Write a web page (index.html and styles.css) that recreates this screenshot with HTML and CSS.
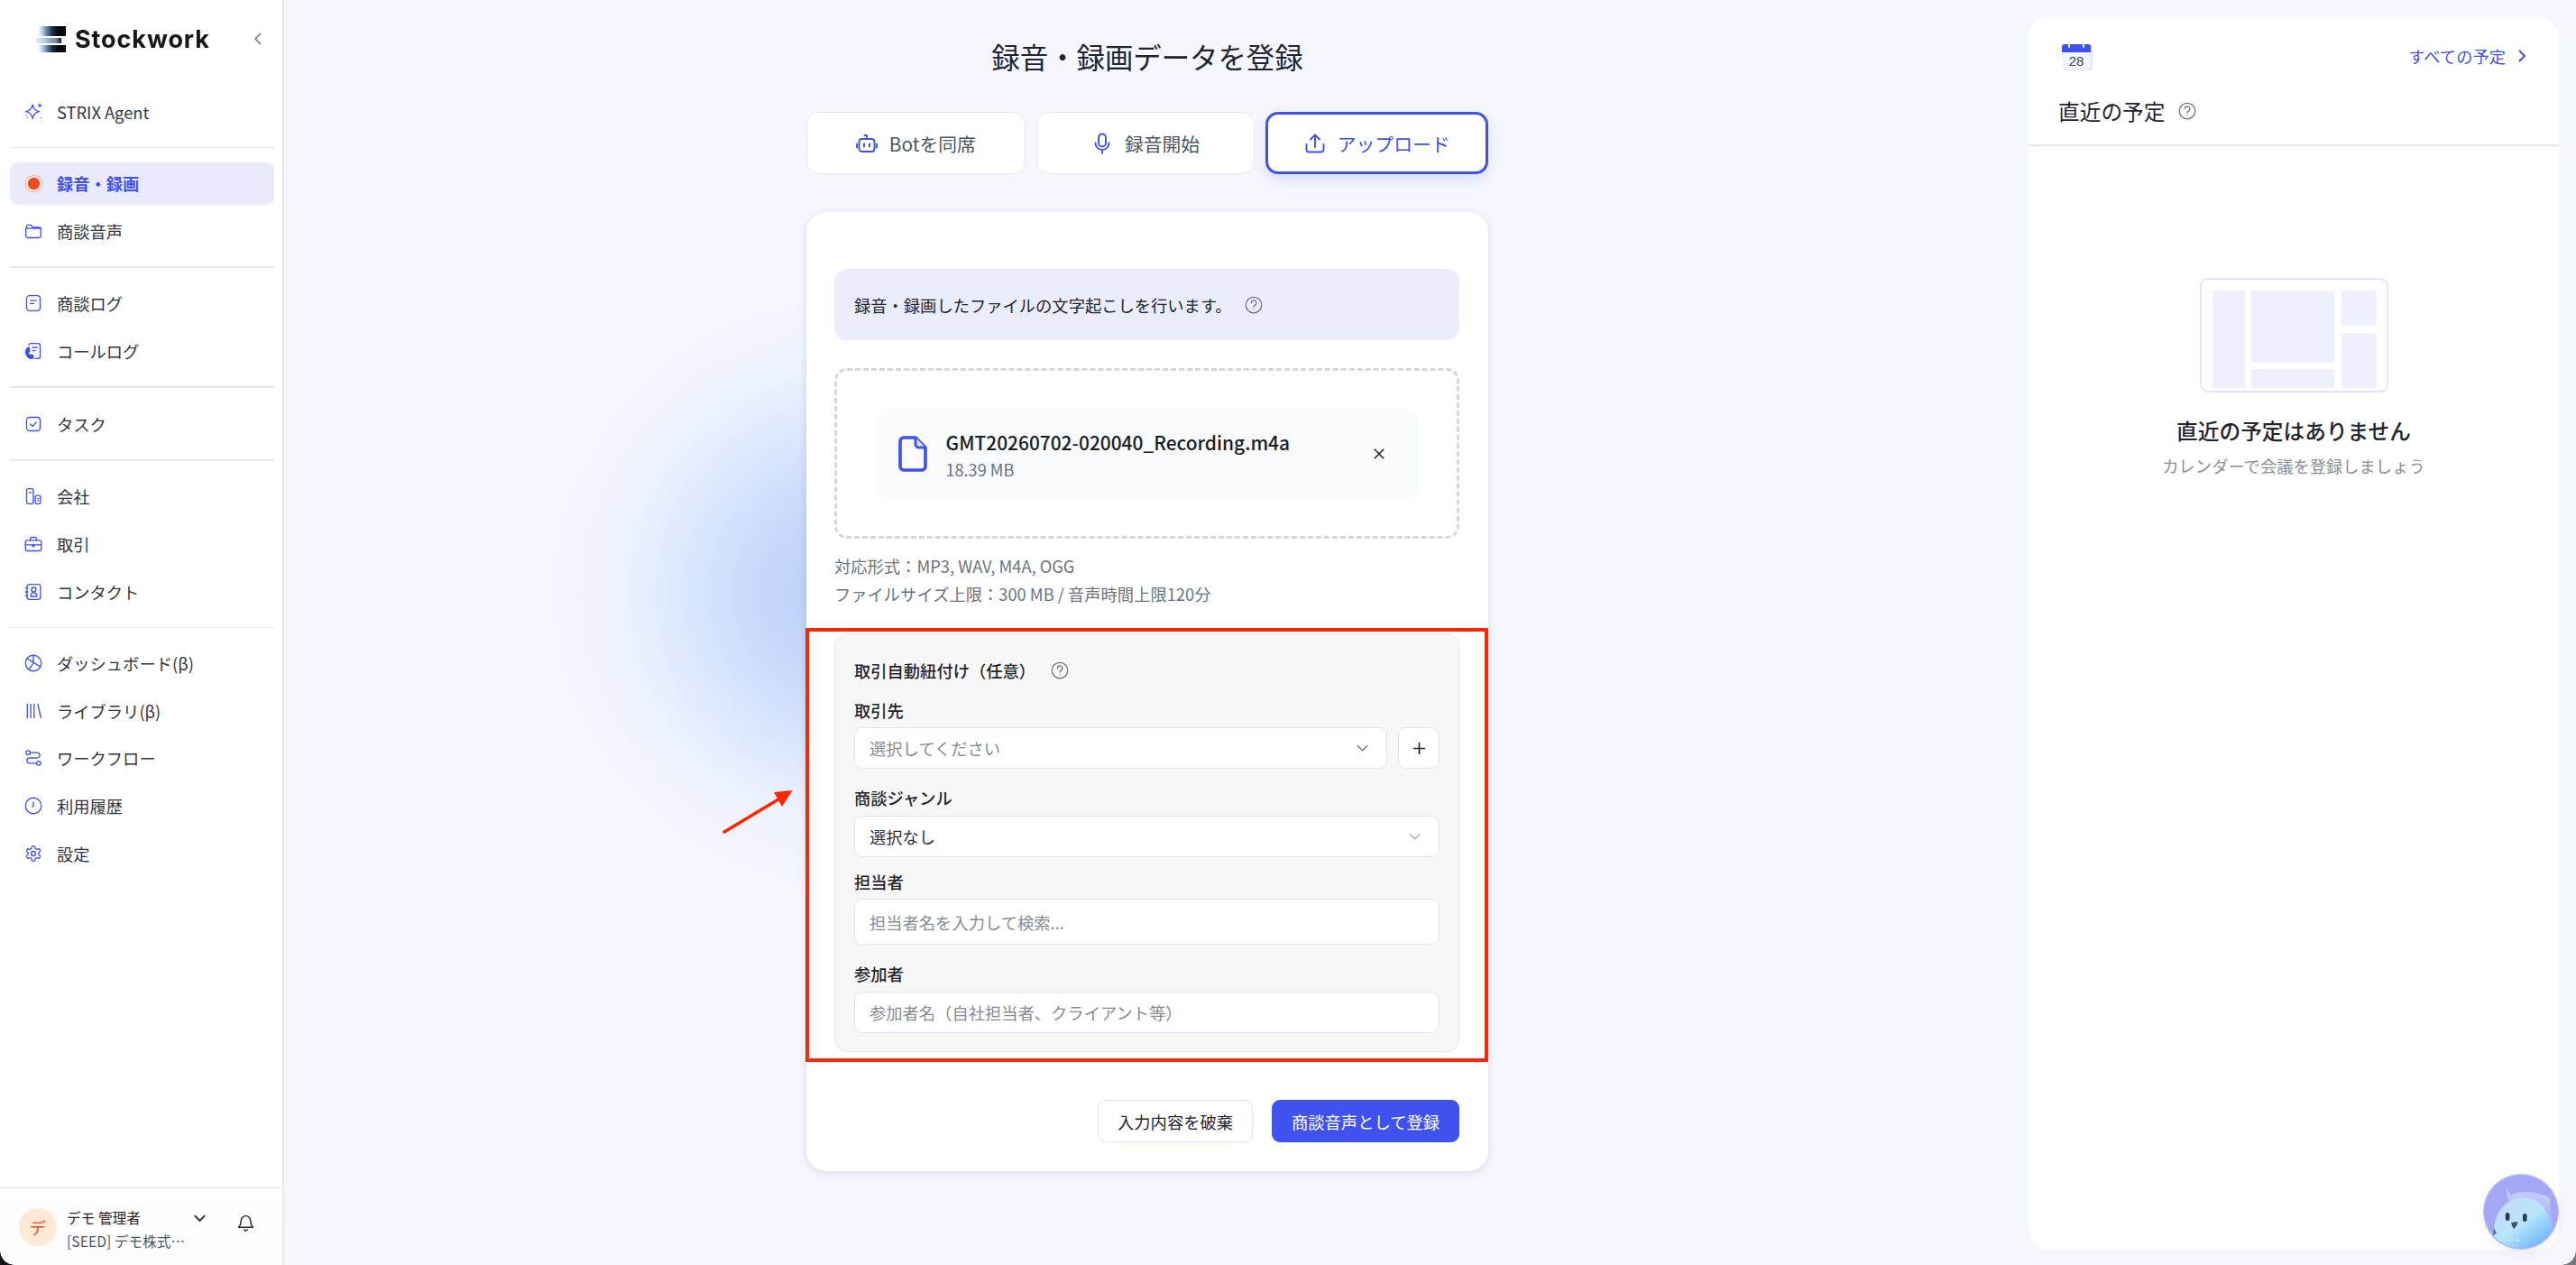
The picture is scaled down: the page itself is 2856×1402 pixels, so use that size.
FILE: index.html
```html
<!DOCTYPE html>
<html lang="ja">
<head>
<meta charset="utf-8">
<title>録音・録画データを登録</title>
<link rel="stylesheet" href="styles.css">
</head>
<body>
<div class="app">
  <aside class="sidebar">
    <div class="brand">
      <svg class="brand-mark" viewBox="0 0 36 32">
        <defs>
          <linearGradient id="bm" x1="0" x2="1" y1="0" y2="0">
            <stop offset="0" stop-color="#b4d0ee" stop-opacity=".25"/>
            <stop offset=".25" stop-color="#6f9cc9"/>
            <stop offset=".5" stop-color="#1c2c40"/>
            <stop offset=".7" stop-color="#08090c"/>
            <stop offset="1" stop-color="#08090c"/>
          </linearGradient>
          <linearGradient id="bm2" x1="0" x2="1" y1="0" y2="0">
            <stop offset="0" stop-color="#c5dcf2" stop-opacity=".5"/>
            <stop offset=".55" stop-color="#86aed5"/>
            <stop offset=".8" stop-color="#7c8592"/>
            <stop offset="1" stop-color="#15171c"/>
          </linearGradient>
        </defs>
        <path fill="url(#bm)" d="M4 2h30v11H4z"/>
        <path fill="url(#bm2)" d="M1 15h28v6H1z"/>
        <path fill="url(#bm)" d="M4 23h30v8H4z"/>
      </svg>
      <span class="brand-name">Stockwork</span>
      <svg class="collapse" viewBox="0 0 12 16"><path d="M9 2 3 8l6 6"/></svg>
    </div>
    <nav class="nav">
      <a class="item">
        <svg class="ico" viewBox="0 0 24 24"><path d="M11 2.500c1 5.500 3.500 8 9 9-5.500 1-8 3.500-9 9.500-1-6-3.500-8.500-9-9.500 5.500-1 8-3.500 9-9z"/><path d="M20.500 1.500v4M18.500 3.500h4"/><path d="M3.500 19.500v.01M2.500 16v.01M22 20v.01"/></svg>
        <span>STRIX Agent</span>
      </a>
      <hr class="rule">
      <a class="item active">
        <svg class="ico rec" viewBox="0 0 24 24"><circle class="rec-halo" cx="12" cy="12" r="11.800"/><circle class="rec-ring" cx="12" cy="12" r="9.200"/><circle class="rec-dot" cx="12" cy="12" r="7.700"/></svg>
        <span>録音・録画</span>
      </a>
      <a class="item">
        <svg class="ico" viewBox="0 0 24 24"><path d="M3 8V5.500A1.500 1.500 0 0 1 4.500 4h4.200l2.300 3h8.500A2.500 2.500 0 0 1 22 9.500v9a2.500 2.500 0 0 1-2.500 2.500h-15A2.500 2.500 0 0 1 2 18.500V8.500h20"/></svg>
        <span>商談音声</span>
      </a>
      <hr class="rule thick">
      <a class="item">
        <svg class="ico" viewBox="0 0 24 24"><rect x="3" y="2" width="18" height="20" rx="4"/><path d="M8 8.500h8M8 12.500h4.500"/></svg>
        <span>商談ログ</span>
      </a>
      <a class="item">
        <svg class="ico" viewBox="0 0 24 24"><path d="M6 4.500A2.500 2.500 0 0 1 8.500 2H18a3 3 0 0 1 3 3v14a3 3 0 0 1-3 3h-4"/><path d="M11 7.500h6M11 11.500h3.500"/><path class="solid" d="M6 7.500c-2.500.8-4 2.700-4 5.700 0 4.500 3 8.800 7.500 8.800 1.500 0 2.500-.7 2.500-1.800l-.4-2.300-3.400-1-1 1.200c-1.300-1.200-2-3-2-4.600l1.600-.8L6.600 8.200z"/></svg>
        <span>コールログ</span>
      </a>
      <hr class="rule thick">
      <a class="item">
        <svg class="ico" viewBox="0 0 24 24"><rect x="3" y="3" width="18" height="18" rx="4"/><path d="m8 12 3 3 5-5.500"/></svg>
        <span>タスク</span>
      </a>
      <hr class="rule thick">
      <a class="item">
        <svg class="ico" viewBox="0 0 24 24"><rect x="3" y="2" width="9" height="20" rx="2.500"/><rect x="14.500" y="11" width="7" height="11" rx="2.500"/><path d="M6 7h3M18 15h1M18 18h1"/></svg>
        <span>会社</span>
      </a>
      <a class="item">
        <svg class="ico" viewBox="0 0 24 24"><rect x="1.500" y="7" width="21" height="14" rx="2.500"/><path d="M8 7V5a2 2 0 0 1 2-2h4a2 2 0 0 1 2 2v2M1.500 13h21"/><path d="M11 13h2v2h-2z" class="solid"/></svg>
        <span>取引</span>
      </a>
      <a class="item">
        <svg class="ico" viewBox="0 0 24 24"><rect x="3.500" y="2" width="18" height="20" rx="3.500"/><circle cx="12.500" cy="9" r="3"/><path d="M8.500 18v-1a4 4 0 0 1 8 0v1zM1.500 7h3M1.500 12h3M1.500 17h3"/></svg>
        <span>コンタクト</span>
      </a>
      <hr class="rule">
      <a class="item">
        <svg class="ico" viewBox="0 0 24 24"><circle cx="12" cy="12" r="10.500"/><path d="M12 1.500V11l8.500 5.500M12 11 4 6M11.500 12.500 6 20.500"/></svg>
        <span>ダッシュボード(β)</span>
      </a>
      <a class="item">
        <svg class="ico" viewBox="0 0 24 24"><path d="M4 3v18M8.500 3v18M13 3v18M18 3l4 18"/></svg>
        <span>ライブラリ(β)</span>
      </a>
      <a class="item">
        <svg class="ico" viewBox="0 0 24 24"><circle cx="5" cy="5" r="2.700"/><circle cx="19" cy="19" r="2.700"/><path d="M8 5h9a3.500 3.500 0 0 1 0 7H7a3.500 3.500 0 0 0 0 7h9"/></svg>
        <span>ワークフロー</span>
      </a>
      <a class="item">
        <svg class="ico" viewBox="0 0 24 24"><circle cx="12" cy="12" r="10.500"/><path d="M12 7v5.500l-1.500 1"/></svg>
        <span>利用履歴</span>
      </a>
      <a class="item">
        <svg class="ico" viewBox="0 0 24 24"><path d="M12.220 2h-.440a2 2 0 0 0-2 2v.180a2 2 0 0 1-1 1.730l-.430.250a2 2 0 0 1-2 0l-.150-.080a2 2 0 0 0-2.730.730l-.220.380a2 2 0 0 0 .730 2.730l.150.100a2 2 0 0 1 1 1.720v.510a2 2 0 0 1-1 1.740l-.150.090a2 2 0 0 0-.730 2.730l.220.380a2 2 0 0 0 2.730.730l.150-.080a2 2 0 0 1 2 0l.430.250a2 2 0 0 1 1 1.730V20a2 2 0 0 0 2 2h.440a2 2 0 0 0 2-2v-.180a2 2 0 0 1 1-1.730l.430-.250a2 2 0 0 1 2 0l.150.080a2 2 0 0 0 2.730-.730l.220-.390a2 2 0 0 0-.730-2.730l-.150-.080a2 2 0 0 1-1-1.740v-.500a2 2 0 0 1 1-1.740l.150-.090a2 2 0 0 0 .730-2.730l-.220-.380a2 2 0 0 0-2.730-.730l-.150.080a2 2 0 0 1-2 0l-.430-.250a2 2 0 0 1-1-1.730V4a2 2 0 0 0-2-2z"/><circle cx="12" cy="12" r="3"/></svg>
        <span>設定</span>
      </a>
    </nav>
    <div class="account">
      <div class="avatar">デ</div>
      <div class="who">
        <div class="who-name">デモ 管理者</div>
        <div class="who-org">[SEED] デモ株式…</div>
      </div>
      <svg class="acct-chev" viewBox="0 0 16 10"><path d="m2 2 6 6 6-6"/></svg>
      <svg class="bell" viewBox="0 0 24 24"><path d="M6 9a6 6 0 0 1 12 0c0 6 2.500 7.500 3 8.500H3c.5-1 3-2.500 3-8.500z"/><path d="M10 20.500a2.300 2.300 0 0 0 4 0"/></svg>
    </div>
  </aside>

  <main class="main">
    <div class="glow"></div>
    <div class="column">
      <h1 class="title">録音・録画データを登録</h1>
      <div class="tabs">
        <button class="tab">
          <svg class="tab-ico" viewBox="0 0 24 24"><rect x="3.500" y="7" width="17" height="14" rx="3"/><path d="M12 7V3H9.500M1 12.500v4M23 12.500v4M9 12.500v3M15 12.500v3"/></svg>
          <span>Botを同席</span>
        </button>
        <button class="tab">
          <svg class="tab-ico" viewBox="0 0 24 24"><rect x="8" y="1.500" width="8" height="14" rx="4"/><path d="M4.500 11.500a7.500 7.500 0 0 0 15 0M12 19v4"/></svg>
          <span>録音開始</span>
        </button>
        <button class="tab current">
          <svg class="tab-ico" viewBox="0 0 24 24"><path d="M12 16V2.500M7 7.500l5-5 5 5M2.500 13v6a2.500 2.500 0 0 0 2.500 2.500h14a2.500 2.500 0 0 0 2.500-2.500v-6"/></svg>
          <span>アップロード</span>
        </button>
      </div>

      <section class="card">
        <div class="banner">
          <span>録音・録画したファイルの文字起こしを行います。</span>
          <svg class="help" viewBox="0 0 24 24"><circle cx="12" cy="12" r="10.500"/><path d="M8.800 9.200a3.300 3.300 0 1 1 4.900 2.900c-1.100.6-1.700 1.200-1.700 2.400"/><path d="M12 17.800v.01"/></svg>
        </div>

        <div class="dropzone">
          <div class="file">
            <svg class="file-ico" viewBox="0 0 32 40"><path d="M6 2h13l11 11v21a4 4 0 0 1-4 4H6a4 4 0 0 1-4-4V6a4 4 0 0 1 4-4z"/><path class="thin" d="M19 2v7a4 4 0 0 0 4 4h7"/></svg>
            <div class="file-meta">
              <div class="file-name">GMT20260702-020040_Recording.m4a</div>
              <div class="file-size">18.39 MB</div>
            </div>
            <svg class="file-x" viewBox="0 0 16 16"><path d="m2 2 12 12M14 2 2 14"/></svg>
          </div>
        </div>

        <div class="hints">
          <div>対応形式：MP3, WAV, M4A, OGG</div>
          <div>ファイルサイズ上限：300 MB / 音声時間上限120分</div>
        </div>

        <div class="panel">
          <div class="panel-head">
            <span>取引自動紐付け（任意）</span>
            <svg class="help" viewBox="0 0 24 24"><circle cx="12" cy="12" r="10.500"/><path d="M8.800 9.200a3.300 3.300 0 1 1 4.900 2.900c-1.100.6-1.700 1.200-1.700 2.400"/><path d="M12 17.800v.01"/></svg>
          </div>
          <label class="label first">取引先</label>
          <div class="row">
            <div class="control grow h46">
              <span class="placeholder">選択してください</span>
              <svg class="chev" viewBox="0 0 16 10"><path d="m2 2 6 6 6-6"/></svg>
            </div>
            <button class="plus"><svg viewBox="0 0 16 16"><path d="M8 1v14M1 8h14"/></svg></button>
          </div>
          <label class="label roomy">商談ジャンル</label>
          <div class="control h46">
            <span>選択なし</span>
            <svg class="chev pale" viewBox="0 0 16 10"><path d="m2 2 6 6 6-6"/></svg>
          </div>
          <label class="label tight">担当者</label>
          <div class="control h51 gray"><span class="placeholder">担当者名を入力して検索...</span></div>
          <label class="label roomy">参加者</label>
          <div class="control h46"><span class="placeholder">参加者名（自社担当者、クライアント等）</span></div>
        </div>

        <div class="actions">
          <button class="btn">入力内容を破棄</button>
          <button class="btn primary">商談音声として登録</button>
        </div>
      </section>
    </div>

    <div class="annotation-box"></div>
    <svg class="annotation-arrow" viewBox="0 0 80 50">
      <path class="shaft" d="M2 47 62 11"/>
      <path class="head" d="M77.700 1 57 3l9 16z"/>
    </svg>
  </main>

  <aside class="schedule">
    <header class="sch-top">
      <div class="sch-row">
        <svg class="cal" viewBox="0 0 34 33">
          <rect x="2" y="4" width="32" height="29" rx="3" fill="#dfe3ff"/>
          <rect x="0" y="4" width="32" height="28" rx="3" fill="#f2f4ff"/>
          <path d="M0 13V7a3 3 0 0 1 3-3h26a3 3 0 0 1 3 3v6z" fill="#3f51ee"/>
          <path d="M8 1v6M24 1v6" stroke="#f2f4ff" stroke-width="2" stroke-linecap="round"/>
          <text x="16" y="28" text-anchor="middle" class="cal-num">28</text>
        </svg>
        <a class="all-link">すべての予定
          <svg viewBox="0 0 10 16"><path d="m2 2 6 6-6 6"/></svg>
        </a>
      </div>
      <div class="sch-title">
        <span>直近の予定</span>
        <svg class="help big" viewBox="0 0 24 24"><circle cx="12" cy="12" r="10.500"/><path d="M8.800 9.200a3.300 3.300 0 1 1 4.900 2.900c-1.100.6-1.700 1.200-1.700 2.400"/><path d="M12 17.800v.01"/></svg>
      </div>
    </header>
    <div class="empty">
      <div class="illus">
        <div class="b b-left"></div>
        <div class="b b-main"></div>
        <div class="b b-rt"></div>
        <div class="b b-low"></div>
        <div class="b b-rb"></div>
      </div>
      <div class="empty-title">直近の予定はありません</div>
      <div class="empty-sub">カレンダーで会議を登録しましょう</div>
    </div>
  </aside>
</div>

<div class="assistant">
  <svg viewBox="0 0 84 84">
    <defs>
      <linearGradient id="bodyg" x1=".1" y1="0" x2=".75" y2="1">
        <stop offset="0" stop-color="#c9d6fb"/>
        <stop offset=".45" stop-color="#b6e6fb"/>
        <stop offset=".75" stop-color="#7fc0f6"/>
        <stop offset="1" stop-color="#6aa4f2"/>
      </linearGradient>
      <linearGradient id="wingg" x1="0" y1="0" x2="1" y2="1">
        <stop offset="0" stop-color="#c4cbfa"/>
        <stop offset="1" stop-color="#a8adf6"/>
      </linearGradient>
      <clipPath id="disc"><circle cx="42" cy="42" r="40.500"/></clipPath>
    </defs>
    <circle cx="42" cy="42" r="42" fill="#b4b7f8"/>
    <circle cx="42" cy="42" r="40.500" fill="#a3a7f6"/>
    <g clip-path="url(#disc)">
      <path fill="#c2c8fa" d="M28 28c-2-3-3-8-1-13 0 4 2 6 4 8 8-3 17-4 26-2 7 1 13 3 17 6l2 40H40z"/>
      <path fill="url(#wingg)" d="M50 25c10 0 18 3 24 10l4 30-22-6z"/>
      <ellipse cx="44" cy="63" rx="32" ry="37" fill="url(#bodyg)"/>
      <path fill="#4d6a99" d="M12 60l3 6-4 2z"/>
      <rect x="24.800" y="43" width="4.600" height="9" rx="2.300" fill="#2f3a4d"/>
      <rect x="44" y="44" width="4.600" height="9" rx="2.300" fill="#2f3a4d"/>
      <path fill="#3f5672" d="M31 54.500c2-1 5-1.500 7.500-1-.5 3-2.500 6-4.500 7.500-1.500-2-2.500-4.500-3-6.500z"/>
      <path d="M27 73c2 1 4 1 6 0M36 73c2 1 3 1 5 0" stroke="#e9f6ff" stroke-width="1.200" fill="none"/>
    </g>
  </svg>
</div>
<div class="corner left"></div>
<div class="corner right"></div>
</body>
</html>
```
FILE: styles.css
```css
* { box-sizing: border-box; }
html, body { margin: 0; height: 100%; }
body {
  font-family: "Noto Sans CJK JP", "Noto Sans", sans-serif;
  font-size: 18.300px;
  color: #1f2430;
  background: #f5f6ff;
  overflow: hidden;
}
button { font: inherit; cursor: pointer; }
h1 { margin: 0; font-weight: 400; }

.app { display: flex; width: 2856px; height: 1402px; }

/* sidebar */
.sidebar {
  width: 315px;
  flex: none;
  display: flex;
  flex-direction: column;
  background: #fff;
  border-right: 2px solid #e8e9ef;
}
.brand { height: 86px; display: flex; align-items: center; padding: 0 0 0 39px; }
.brand-mark { width: 36px; height: 32px; filter: blur(.7px); flex: none; }
.brand-name {
  margin-left: 8px;
  font-family: "Inter", sans-serif;
  font-weight: 700;
  font-size: 27px;
  letter-spacing: .9px;
  color: #17181c;
  filter: blur(.3px);
}
.collapse { width: 12px; height: 16px; margin-left: 47px; fill: none; stroke: #8b8f98; stroke-width: 1.800; }

.nav { padding: 14px 9px 0 11px; display: flex; flex-direction: column; gap: 5.700px; }
.item {
  height: 47px;
  display: flex;
  align-items: center;
  gap: 16px;
  padding: 0 16px;
  border-radius: 9px;
  color: #2f3542;
}
.item span { line-height: 26px; }
.item.active { background: #e9ebfd; color: #3f51ee; font-weight: 700; }
.ico { width: 20px; height: 20px; flex: none; fill: none; stroke: #3f51ee; stroke-width: 1.600; stroke-linecap: round; stroke-linejoin: round; }
.ico .solid { fill: #3f51ee; }
.rec { stroke: none; width: 21px; height: 21px; margin-left: -.5px; margin-right: -.5px; }
.rec-halo { fill: #fbc9ba; }
.rec-ring { fill: #fff; }
.rec-dot { fill: #f04a24; }
.rule { width: 100%; height: 1px; margin: 10.100px 0; border: 0; background: #e7e8ec; }
.rule.thick { height: 2px; }

.account {
  margin-top: auto;
  height: 86px;
  border-top: 1px solid #e7e8ec;
  padding: 7px 0 0 21px;
  display: flex;
  align-items: center;
  background: linear-gradient(#fff, #fcfcfd);
}
.avatar {
  width: 42px; height: 42px;
  margin-top: -7px;
  border-radius: 50%;
  background: #fde9d6;
  color: #f04a24;
  display: flex; align-items: center; justify-content: center;
  flex: none;
}
.who { margin-left: 11px; width: 142px; }
.who-name { font-size: 15.700px; line-height: 26px; color: #1f2430; }
.who-org { font-size: 15.700px; line-height: 26px; color: #4f5664; white-space: nowrap; }
.acct-chev { width: 15px; height: 10px; margin: -26px 0 0 -2px; fill: none; stroke: #1f2a3a; stroke-width: 2; flex: none; }
.bell { width: 21px; height: 21px; margin: -16px 0 0 33px; fill: none; stroke: #1f2430; stroke-width: 1.700; stroke-linejoin: round; stroke-linecap: round; flex: none; }

/* main */
.main {
  flex: 1;
  position: relative;
  overflow: hidden;
  display: flex;
  justify-content: center;
  padding-right: 20px;
}
.glow {
  position: absolute;
  left: 296px;
  top: 327px;
  width: 660px;
  height: 660px;
  border-radius: 50%;
  background: radial-gradient(circle closest-side, #b9cdf9 0, #c8d8fb 30%, #dbe7fe 55%, #edf2ff 77%, rgba(245,246,255,0) 100%);
}
.column { position: relative; width: 756px; }
.title { text-align: center; font-size: 31.400px; line-height: 44px; padding-top: 41px; color: #1f2430; }
.tabs { display: flex; gap: 12px; margin-top: 39px; }
.tab {
  flex: 1;
  height: 69px;
  display: flex;
  align-items: center;
  justify-content: center;
  gap: 13px;
  background: #fff;
  border: 1.500px solid #e7e8ee;
  border-radius: 14px;
  color: #4b5563;
  font-size: 20.800px;
}
.tab-ico { width: 24px; height: 24px; fill: none; stroke: #3f51ee; stroke-width: 1.900; stroke-linecap: round; stroke-linejoin: round; }
.tab.current {
  border: 3px solid #3f51ee;
  color: #3f51ee;
  box-shadow: 0 6px 14px rgba(63, 81, 238, .14);
}

.card {
  margin-top: 42px;
  height: 1063px;
  padding: 63px 32px 0 31px;
  background: #fff;
  border-radius: 22px;
  box-shadow: 0 2px 8px rgba(40, 50, 90, .14);
}
.banner {
  height: 79px;
  display: flex;
  align-items: center;
  padding-left: 22px;
  background: #ebecfc;
  border-radius: 14px;
  color: #1f2430;
}
.help { width: 20px; height: 20px; margin-left: 14px; fill: none; stroke: #6f7177; stroke-width: 1.500; stroke-linecap: round; flex: none; }
.help.big { margin-left: 15px; }
.panel-head .help { margin-left: 17px; }

.dropzone {
  margin-top: 31px;
  height: 189px;
  border: 3px dashed #d5d7dd;
  border-radius: 14px;
  display: flex;
  align-items: center;
  justify-content: center;
}
.file {
  width: 602px;
  height: 100px;
  display: flex;
  align-items: center;
  padding: 0 26px 0 25px;
  background: #f9fafc;
  border-radius: 14px;
}
.file-ico { width: 32px; height: 40px; fill: none; stroke: #3f51ee; stroke-width: 3.600; stroke-linejoin: round; flex: none; }
.file-ico .thin { stroke-width: 3; fill: #dfe3ff; }
.file-meta { margin-left: 21px; flex: 1; padding-top: 2px; }
.file-name { font-size: 20.900px; font-weight: 500; line-height: 30px; color: #1a1d26; }
.file-size { font-size: 18.100px; line-height: 26px; color: #6b7280; margin-top: 2px; }
.file-x { width: 14px; height: 14px; fill: none; stroke: #1f2430; stroke-width: 1.800; margin-right: 11px; }

.hints { margin-top: 15px; color: #6b7280; line-height: 31px; }

.panel {
  margin-top: 28px;
  height: 464px;
  padding: 25px 21px 0;
  background: #f7f7f8;
  border: 1px solid #e6e7ea;
  border-radius: 14px;
}
.panel-head { height: 30px; display: flex; align-items: center; font-weight: 500; color: #1f2430; }
.label { display: block; font-weight: 500; line-height: 28px; color: #1f2430; }
.label.first { margin-top: 15px; margin-bottom: 5px; }
.label.roomy { margin-top: 18px; margin-bottom: 6px; }
.label.tight { margin-top: 13px; margin-bottom: 5px; }
.row { display: flex; gap: 12px; }
.control {
  display: flex;
  align-items: center;
  justify-content: space-between;
  padding: 0 16px;
  background: #fff;
  border: 1.500px solid #dfe2fb;
  border-radius: 9px;
  color: #2b303c;
}
.control.grow { flex: 1; }
.control.gray { border-color: #e6e7ea; }
.h46 { height: 46px; }
.h51 { height: 51px; }
.placeholder { color: #868b94; }
.chev { width: 15px; height: 10px; margin-right: 3px; fill: none; stroke: #6f7680; stroke-width: 1.400; }
.chev.pale { stroke: #a9adb4; }
.plus {
  width: 46px; height: 46px;
  padding: 0;
  display: flex; align-items: center; justify-content: center;
  background: #fff;
  border: 1.500px solid #dfe2fb;
  border-radius: 9px;
}
.plus svg { width: 15px; height: 15px; fill: none; stroke: #1f2430; stroke-width: 1.800; }

.actions { margin-top: 53px; display: flex; justify-content: flex-end; gap: 21px; }
.btn {
  height: 47px;
  padding: 0 21px;
  background: #fff;
  border: 1.500px solid #dfe2fb;
  border-radius: 9px;
  color: #1f2430;
}
.btn.primary { background: #3f51ee; border-color: #3f51ee; color: #fff; }

.annotation-box {
  position: absolute;
  left: 578px;
  top: 696px;
  width: 757px;
  height: 481px;
  border: 4px solid #ff2600;
  pointer-events: none;
}
.annotation-arrow { position: absolute; left: 486px; top: 875px; width: 80px; height: 50px; }
.annotation-arrow .shaft { stroke: #ff2600; stroke-width: 3.500; stroke-linecap: round; fill: none; }
.annotation-arrow .head { fill: #ff2600; }

/* schedule */
.schedule {
  width: 588px;
  flex: none;
  margin: 19px 19px 17px 0;
  background: #fff;
  border-radius: 22px;
}
.sch-top { height: 143px; border-bottom: 2px solid #e7e8ec; padding: 0 0 0 33px; overflow: hidden; }
.sch-row { display: flex; align-items: center; justify-content: space-between; padding: 26px 36px 0 4px; }
.cal { width: 34px; height: 33px; }
.cal-num { font-family: "Liberation Sans", sans-serif; font-size: 15px; fill: #40444f; }
.all-link { display: flex; align-items: center; gap: 13px; color: #3f51ee; }
.all-link svg { width: 10px; height: 16px; fill: none; stroke: #3f51ee; stroke-width: 2; }
.sch-title { display: flex; align-items: center; margin-top: 26px; font-size: 23.700px; line-height: 38px; color: #1f2430; }

.empty { display: flex; flex-direction: column; align-items: center; padding-top: 146px; }
.illus {
  width: 209px;
  height: 127px;
  padding: 12px;
  border: 2px solid #e2e5ff;
  border-radius: 9px;
  display: grid;
  grid-template-columns: 36px 92px 39px;
  grid-template-rows: 39px 33px 21px 0;
  column-gap: 7.500px;
  row-gap: 7.500px;
}
.b { background: #eef0fd; border-radius: 3px; }
.b-left { grid-column: 1; grid-row: 1 / 4; }
.b-main { grid-column: 2; grid-row: 1 / 3; }
.b-rt { grid-column: 3; grid-row: 1; }
.b-low { grid-column: 2; grid-row: 3; }
.b-rb { grid-column: 3; grid-row: 2 / 4; }
.empty-title { margin-top: 24px; font-size: 23.700px; line-height: 36px; font-weight: 500; color: #1f2430; }
.empty-sub { margin-top: 7px; line-height: 28px; color: #8a8e96; }

.assistant {
  position: fixed;
  right: 19px;
  bottom: 17px;
  width: 84px;
  height: 84px;
  border-radius: 50%;
  box-shadow: 0 4px 14px rgba(90, 100, 70, .08);
}
.assistant svg { display: block; width: 84px; height: 84px; }

.corner { position: fixed; bottom: 0; width: 16px; height: 16px; }
.corner.left { left: 0; background: radial-gradient(circle at 100% 0, rgba(0,0,0,0) 15.500px, #14141a 16px); }
.corner.right { right: 0; background: radial-gradient(circle at 0 0, rgba(0,0,0,0) 15.500px, #77777c 16px); }
```
